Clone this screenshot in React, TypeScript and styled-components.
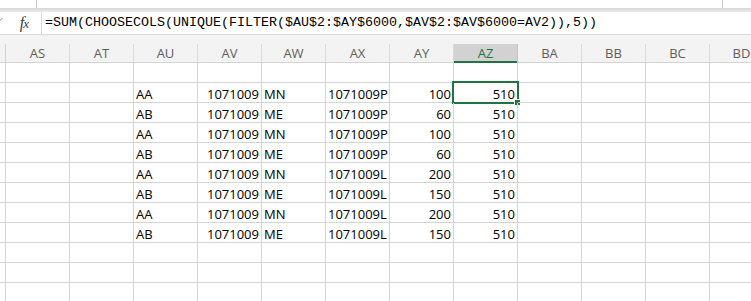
import React from 'react';
import styled, { createGlobalStyle } from 'styled-components';

const GlobalStyle = createGlobalStyle`
  html, body {
    margin: 0;
    padding: 0;
    background: #fff;
    overflow: hidden;
  }
`;

type Align = 'left' | 'right';

interface Column {
  name: string;
  align: Align;
}

const columns: Column[] = [
  { name: 'AS', align: 'left' },
  { name: 'AT', align: 'left' },
  { name: 'AU', align: 'left' },
  { name: 'AV', align: 'right' },
  { name: 'AW', align: 'left' },
  { name: 'AX', align: 'left' },
  { name: 'AY', align: 'right' },
  { name: 'AZ', align: 'right' },
  { name: 'BA', align: 'left' },
  { name: 'BB', align: 'left' },
  { name: 'BC', align: 'left' },
  { name: 'BD', align: 'left' },
];

const data: string[][] = [
  ['AA', '1071009', 'MN', '1071009P', '100', '510'],
  ['AB', '1071009', 'ME', '1071009P', '60', '510'],
  ['AA', '1071009', 'MN', '1071009P', '100', '510'],
  ['AB', '1071009', 'ME', '1071009P', '60', '510'],
  ['AA', '1071009', 'MN', '1071009L', '200', '510'],
  ['AB', '1071009', 'ME', '1071009L', '150', '510'],
  ['AA', '1071009', 'MN', '1071009L', '200', '510'],
  ['AB', '1071009', 'ME', '1071009L', '150', '510'],
];

// sheet rows: one blank row, the data, then three blank rows
const rows: string[][] = [
  [],
  ...data.map((r) => ['', '', ...r]),
  [],
  [],
  [],
];

const ACTIVE_COL = 7;
const ACTIVE_ROW = 1;

const FORMULA = '=SUM(CHOOSECOLS(UNIQUE(FILTER($AU$2:$AY$6000,$AV$2:$AV$6000=AV2)),5))';

const App: React.FC = () => {
  return (
    <Window>
      <GlobalStyle />
      <RibbonEdge>
        <RibbonGroup width={37} />
        <RibbonGroup width={686} />
      </RibbonEdge>
      <RibbonShadow />
      <FormulaBar>
        <NameArea>
          <Chevron width="8" height="6" viewBox="0 0 8 6">
            <path d="M0.5 1 L4 4.5 L7.5 1" fill="none" stroke="#8a8a8a" strokeWidth="1" />
          </Chevron>
          <FxLabel>
            f<FxSub>x</FxSub>
          </FxLabel>
        </NameArea>
        <FormulaInput>{FORMULA}</FormulaInput>
      </FormulaBar>
      <Gap />
      <Sheet>
        <HeaderRow>
          <RowHeaderCorner />
          {columns.map((c, i) => (
            <ColHeader key={c.name} active={i === ACTIVE_COL}>
              {c.name}
            </ColHeader>
          ))}
        </HeaderRow>
        {rows.map((r, ri) => (
          <Row key={ri}>
            <RowHeader />
            {columns.map((c, ci) => (
              <Cell key={c.name} align={c.align}>
                {r[ci] || ''}
                {ri === ACTIVE_ROW && ci === ACTIVE_COL && (
                  <Selection>
                    <FillHandle />
                  </Selection>
                )}
              </Cell>
            ))}
          </Row>
        ))}
      </Sheet>
    </Window>
  );
};

const Window = styled.div`
  width: 751px;
  height: 301px;
  overflow: hidden;
  display: flex;
  flex-direction: column;
  background: #fff;
`;

const RibbonEdge = styled.div`
  height: 8px;
  display: flex;
  flex-shrink: 0;
`;

const RibbonGroup = styled.div<{ width: number }>`
  width: ${(p) => p.width}px;
  border-right: 1px solid #c8c8c8;
  box-sizing: border-box;
`;

const RibbonShadow = styled.div`
  height: 4px;
  flex-shrink: 0;
  background: linear-gradient(#d6d6d6, #ececec);
`;

const FormulaBar = styled.div`
  height: 23px;
  flex-shrink: 0;
  display: flex;
  background: #fff;
  border-bottom: 1px solid #d9d9d9;
  box-sizing: border-box;
`;

const NameArea = styled.div`
  position: relative;
  width: 41px;
  flex-shrink: 0;
  display: flex;
  align-items: center;
  justify-content: flex-end;
  padding-right: 13px;
  box-sizing: border-box;
`;

const Chevron = styled.svg`
  position: absolute;
  left: -5px;
  top: 5px;
`;

const FxLabel = styled.span`
  font-family: 'Liberation Serif', 'DejaVu Serif', serif;
  font-style: italic;
  font-size: 16px;
  color: #3c3c3c;
  line-height: 1;
  letter-spacing: -1px;
`;

const FxSub = styled.span`
  font-size: 13px;
`;

const FormulaInput = styled.div`
  flex: 1;
  border-left: 1px solid #d9d9d9;
  padding: 0 0 0 3px;
  font-family: 'Liberation Mono', 'DejaVu Sans Mono', monospace;
  font-size: 13.33px;
  line-height: 21px;
  color: #000;
  white-space: nowrap;
  overflow: hidden;
`;

const Gap = styled.div`
  height: 9px;
  flex-shrink: 0;
  background: #f3f3f3;
`;

const Sheet = styled.div`
  display: flex;
  flex-direction: column;
  font-family: 'Open Sans', 'Liberation Sans', sans-serif;
`;

const HeaderRow = styled.div`
  display: flex;
  height: 19px;
  background: #f3f3f3;
  border-bottom: 1px solid #d4d4d4;
  box-sizing: border-box;
`;

const RowHeaderCorner = styled.div`
  width: 6px;
  flex-shrink: 0;
  border-right: 1px solid #d4d4d4;
  box-sizing: border-box;
`;

const ColHeader = styled.div<{ active?: boolean }>`
  width: 64px;
  flex-shrink: 0;
  box-sizing: border-box;
  border-right: 1px solid ${(p) => (p.active ? '#c6c6c6' : '#dadada')};
  background: ${(p) => (p.active ? '#d2d2d2' : 'transparent')};
  color: ${(p) => (p.active ? '#217346' : '#5e5e5e')};
  box-shadow: ${(p) => (p.active ? 'inset 0 -2px 0 #217346' : 'none')};
  margin-bottom: ${(p) => (p.active ? '-1px' : '0')};
  font-size: 13px;
  line-height: 18px;
  text-align: center;
`;

const Row = styled.div`
  display: flex;
  height: 20px;
  flex-shrink: 0;
`;

const RowHeader = styled.div`
  width: 6px;
  flex-shrink: 0;
  background: #fff;
  border-right: 1px solid #d4d4d4;
  border-bottom: 1px solid #d4d4d4;
  box-sizing: border-box;
`;

const Cell = styled.div<{ align: Align }>`
  position: relative;
  width: 64px;
  flex-shrink: 0;
  box-sizing: border-box;
  border-right: 1px solid #d4d4d4;
  border-bottom: 1px solid #d4d4d4;
  display: flex;
  align-items: flex-end;
  justify-content: ${(p) => (p.align === 'right' ? 'flex-end' : 'flex-start')};
  padding: 0 2px 0 2px;
  font-size: 13px;
  line-height: 16px;
  color: #000;
  white-space: nowrap;
`;

const Selection = styled.div`
  position: absolute;
  left: -2px;
  top: -2px;
  width: 67px;
  height: 23px;
  border: 2px solid #217346;
  box-sizing: border-box;
  pointer-events: none;
`;

const FillHandle = styled.div`
  position: absolute;
  right: -4px;
  bottom: -4px;
  width: 5px;
  height: 5px;
  background: #217346;
  border: 1px solid #fff;
`;

export default App;
